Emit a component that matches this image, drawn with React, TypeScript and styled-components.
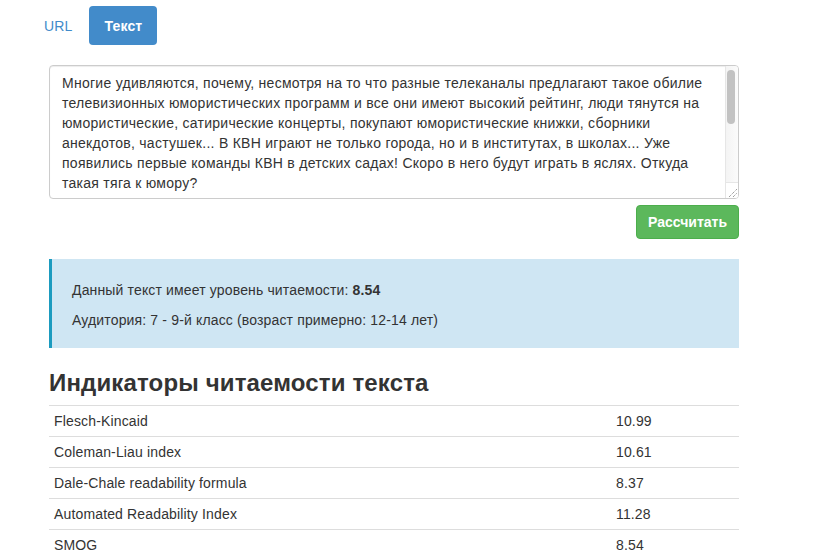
import React from 'react';
import styled, { createGlobalStyle } from 'styled-components';

interface Indicator {
  name: string;
  value: string;
}

const indicators: Indicator[] = [
  { name: 'Flesch-Kincaid', value: '10.99' },
  { name: 'Coleman-Liau index', value: '10.61' },
  { name: 'Dale-Chale readability formula', value: '8.37' },
  { name: 'Automated Readability Index', value: '11.28' },
  { name: 'SMOG', value: '8.54' },
];

const sampleText =
  'Многие удивляются, почему, несмотря на то что разные телеканалы предлагают такое обилие телевизионных юмористических программ и все они имеют высокий рейтинг, люди тянутся на юмористические, сатирические концерты, покупают юмористические книжки, сборники анекдотов, частушек... В КВН играют не только города, но и в институтах, в школах... Уже появились первые команды КВН в детских садах! Скоро в него будут играть в яслях. Откуда такая тяга к юмору?';

const App: React.FC = () => {
  return (
    <>
      <GlobalStyle />
      <Page>
        <Pills>
          <Pill>
            <PillLink href="#">URL</PillLink>
          </Pill>
          <Pill>
            <PillLink href="#" active>
              Текст
            </PillLink>
          </Pill>
        </Pills>

        <Container>
          <Field>
            <TextArea rows={6} defaultValue={sampleText} spellCheck={false} />
            <ScrollTrack>
              <ScrollRail>
                <ScrollThumb />
              </ScrollRail>
              <ResizeGrip>
                <svg width="12" height="12" viewBox="0 0 12 12">
                  <path d="M3 11 L11 3 M7 11 L11 7" stroke="#777" strokeWidth="1" strokeDasharray="1 1" fill="none" />
                </svg>
              </ResizeGrip>
            </ScrollTrack>
          </Field>
          <Actions>
            <SubmitButton type="button">Рассчитать</SubmitButton>
          </Actions>

          <Callout>
            <p>
              Данный текст имеет уровень читаемости: <strong>8.54</strong>
            </p>
            <p>Аудитория: 7 - 9-й класс (возраст примерно: 12-14 лет)</p>
          </Callout>

          <Heading>Индикаторы читаемости текста</Heading>
          <Table>
            <tbody>
              {indicators.map(row => (
                <tr key={row.name}>
                  <NameCell>{row.name}</NameCell>
                  <ValueCell>{row.value}</ValueCell>
                </tr>
              ))}
            </tbody>
          </Table>
        </Container>
      </Page>
    </>
  );
};

const GlobalStyle = createGlobalStyle`
  * {
    box-sizing: border-box;
  }
  body {
    margin: 0;
    background: #fff;
    color: #333;
    font-family: "Liberation Sans", Arial, sans-serif;
    font-size: 14px;
    line-height: 20px;
    letter-spacing: 0.15px;
  }
`;

const Page = styled.div`
  width: 835px;
  padding-top: 6px;
`;

const Pills = styled.ul`
  list-style: none;
  margin: 0 0 20px 29px;
  padding: 0;
  display: flex;
  gap: 2px;
`;

const Pill = styled.li`
  display: block;
`;

const PillLink = styled.a<{ active?: boolean }>`
  display: block;
  padding: 10px 15px 9px;
  border-radius: 4px;
  text-decoration: none;
  font-size: 14px;
  line-height: 20px;
  color: ${props => (props.active ? '#fff' : '#428bca')};
  background: ${props => (props.active ? '#428bca' : 'transparent')};
  font-weight: ${props => (props.active ? 700 : 400)};
`;

const Container = styled.div`
  width: 690px;
  margin-left: 49px;
`;

const Field = styled.div`
  display: flex;
  height: 134px;
  border: 1px solid #ccc;
  border-radius: 4px;
  overflow: hidden;
  box-shadow: inset 0 1px 1px rgba(0, 0, 0, 0.075);
`;

const TextArea = styled.textarea`
  flex: 1;
  display: block;
  padding: 7px 12px 6px;
  border: none;
  background: transparent;
  font-family: "Liberation Sans", Arial, sans-serif;
  font-size: 14px;
  line-height: 20px;
  letter-spacing: 0.27px;
  color: #333;
  resize: none;
  outline: none;
  overflow: hidden;
`;

const ScrollTrack = styled.div`
  width: 13px;
  display: flex;
  flex-direction: column;
  border-left: 1px solid #e6e6e6;
  background: linear-gradient(to right, #f4f4f4, #fbfbfb);
`;

const ScrollRail = styled.div`
  flex: 1;
  padding: 4px 3px 0 1px;
  border-bottom: 1px solid #e6e6e6;
`;

const ScrollThumb = styled.div`
  width: 8px;
  height: 54px;
  border-radius: 4px;
  background: #c2c2c2;
`;

const ResizeGrip = styled.div`
  height: 15px;
  display: flex;
  align-items: flex-end;
  justify-content: flex-end;
  background: #fff;
`;

const Actions = styled.div`
  display: flex;
  justify-content: flex-end;
  margin-top: 6px;
`;

const SubmitButton = styled.button`
  height: 34px;
  padding: 6px 11px;
  border: 1px solid #4cae4c;
  border-radius: 4px;
  background: #5cb85c;
  color: #fff;
  font-family: "Liberation Sans", Arial, sans-serif;
  font-size: 14px;
  font-weight: 700;
  line-height: 20px;
  letter-spacing: 0;
  cursor: pointer;
`;

const Callout = styled.div`
  margin-top: 20px;
  padding: 21px 20px 18px 20px;
  background: #cfe6f3;
  border-left: 3px solid #1b9bbf;

  p {
    margin: 0 0 10px;
  }
  p:last-child {
    margin-bottom: 0;
  }
`;

const Heading = styled.h3`
  margin: 22px 0 9px;
  font-size: 24px;
  line-height: 26px;
  font-weight: 700;
  color: #333;
`;

const Table = styled.table`
  width: 100%;
  border-collapse: collapse;
  border-spacing: 0;

  td {
    padding: 5px 5px;
    line-height: 20px;
    border-top: 1px solid #ddd;
    vertical-align: top;
  }
`;

const NameCell = styled.td`
  width: 562px;
`;

const ValueCell = styled.td``;

export default App;
